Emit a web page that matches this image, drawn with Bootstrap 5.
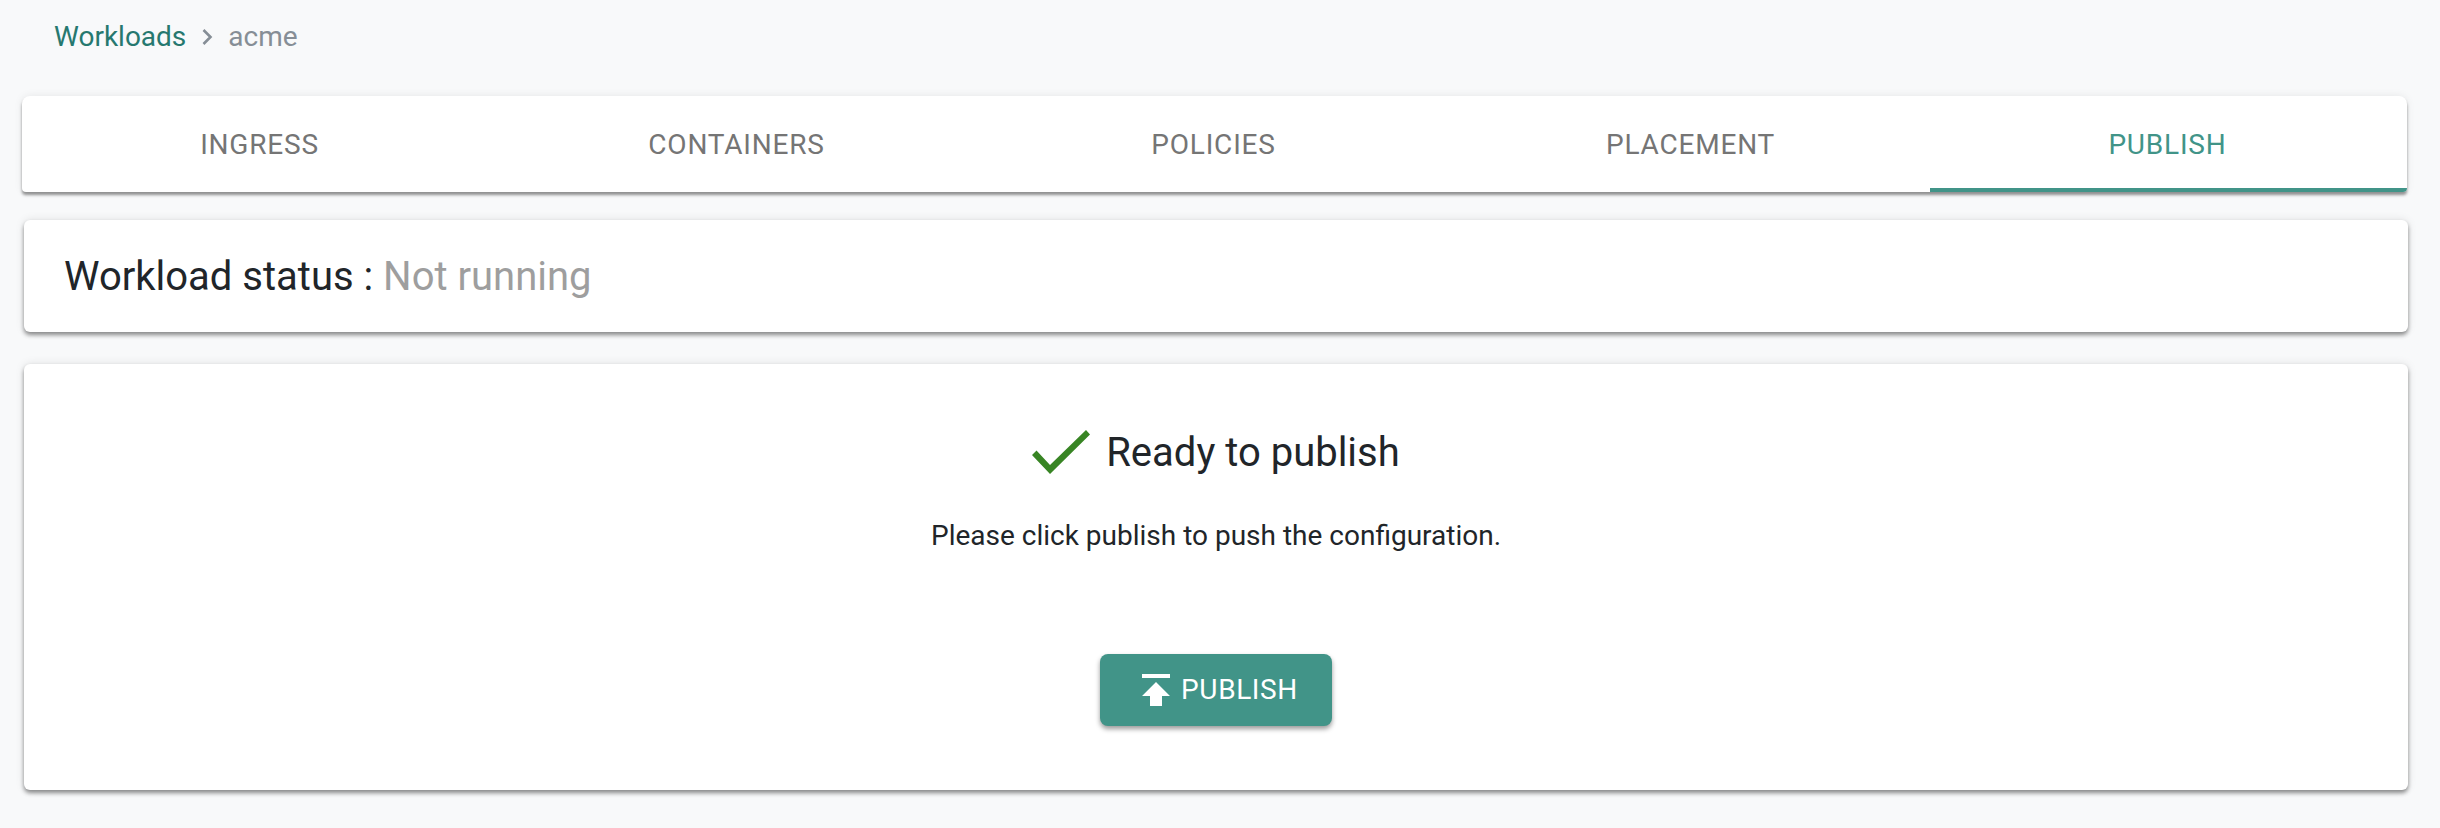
<!DOCTYPE html>
<html lang="en">
<head>
<meta charset="utf-8">
<title>Publish</title>
<link href="https://cdn.jsdelivr.net/npm/bootstrap@5.3.0/dist/css/bootstrap.min.css" rel="stylesheet">
<style>
body{background:#f8f9fa;font-family:Roboto,"Liberation Sans",sans-serif;color:#212529;height:828px;overflow:hidden}
.crumbs{height:96px;padding:0 0 22px 54px;font-size:28px;line-height:32px}
.crumbs a{color:#26786f;text-decoration:none}
.crumb-sep{margin:0 14px 0 15px;width:13px;height:18px}
.crumb-cur{color:#868e96}
.tabbar{margin:0 33px 0 22px;height:96px;background:#fff;border-radius:8px 8px 4px 4px;box-shadow:0 3px 3px rgba(0,0,0,.4),0 0 8px rgba(0,0,0,.08);overflow:hidden}
.tabbar .nav-link{height:96px;padding:0 2px 0 0;border-radius:0;color:#757575;font-size:28px;letter-spacing:.8px;line-height:97px;border-bottom:4px solid transparent;background:none}
.tabbar .nav-link.active{color:#419488;border-bottom-color:#419488;background:none}
.pane{margin:28px 32px 0 24px;background:#fff;border:0;border-radius:6px;box-shadow:0 3px 4px rgba(0,0,0,.42),0 0 10px rgba(0,0,0,.1)}
.status{height:112px;padding:2px 0 0 40px;font-size:40px}
.status-off{color:#9e9e9e}
.ready{margin-top:32px;height:426px;padding-top:59px}
.ready-title{font-size:40px;line-height:60px;gap:16px}
.ready-title svg{margin-top:-2px}
.ready-text{font-size:28px;line-height:36px;margin:35px 0 0;color:#212529}
.pub-btn{margin-top:100px;width:232px;height:72px;padding:0 0 0 8px;background:#419488;color:#fff;border:0;border-radius:8px;font-size:28px;letter-spacing:.6px;box-shadow:0 3px 5px rgba(0,0,0,.4);gap:11px}
.pub-btn:hover{background:#419488;color:#fff}
</style>
</head>
<body>
<nav class="crumbs d-flex align-items-center" aria-label="breadcrumb">
  <a href="#">Workloads</a>
  <svg class="crumb-sep" viewBox="0 0 13 18"><path d="M2.5 2l7 7-7 7" fill="none" stroke="#868e96" stroke-width="2.6"/></svg>
  <span class="crumb-cur">acme</span>
</nav>
<ul class="nav nav-pills nav-justified tabbar">
  <li class="nav-item"><a class="nav-link" href="#">INGRESS</a></li>
  <li class="nav-item"><a class="nav-link" href="#">CONTAINERS</a></li>
  <li class="nav-item"><a class="nav-link" href="#">POLICIES</a></li>
  <li class="nav-item"><a class="nav-link" href="#">PLACEMENT</a></li>
  <li class="nav-item"><a class="nav-link active" href="#">PUBLISH</a></li>
</ul>
<div class="card pane status flex-row align-items-center">
  <span>Workload status :&nbsp;<span class="status-off">Not running</span></span>
</div>
<div class="card pane ready d-flex flex-column align-items-center">
  <div class="ready-title d-flex align-items-center">
    <svg width="58" height="44" viewBox="0 0 58 44"><path d="M0 25l4.500-4.500L18 35 54 0l4 4.500L18 44z" fill="#388524"/></svg>
    <span>Ready to publish</span>
  </div>
  <p class="ready-text">Please click publish to push the configuration.</p>
  <button type="button" class="btn pub-btn d-flex align-items-center justify-content-center">
    <svg width="28" height="32" viewBox="0 0 28 32"><path d="M0 0h28v4H0zM14 8l14 14h-8v10H8V22H0z" fill="#fff"/></svg>
    <span>PUBLISH</span>
  </button>
</div>
<script src="https://cdn.jsdelivr.net/npm/bootstrap@5.3.0/dist/js/bootstrap.bundle.min.js"></script>
</body>
</html>
